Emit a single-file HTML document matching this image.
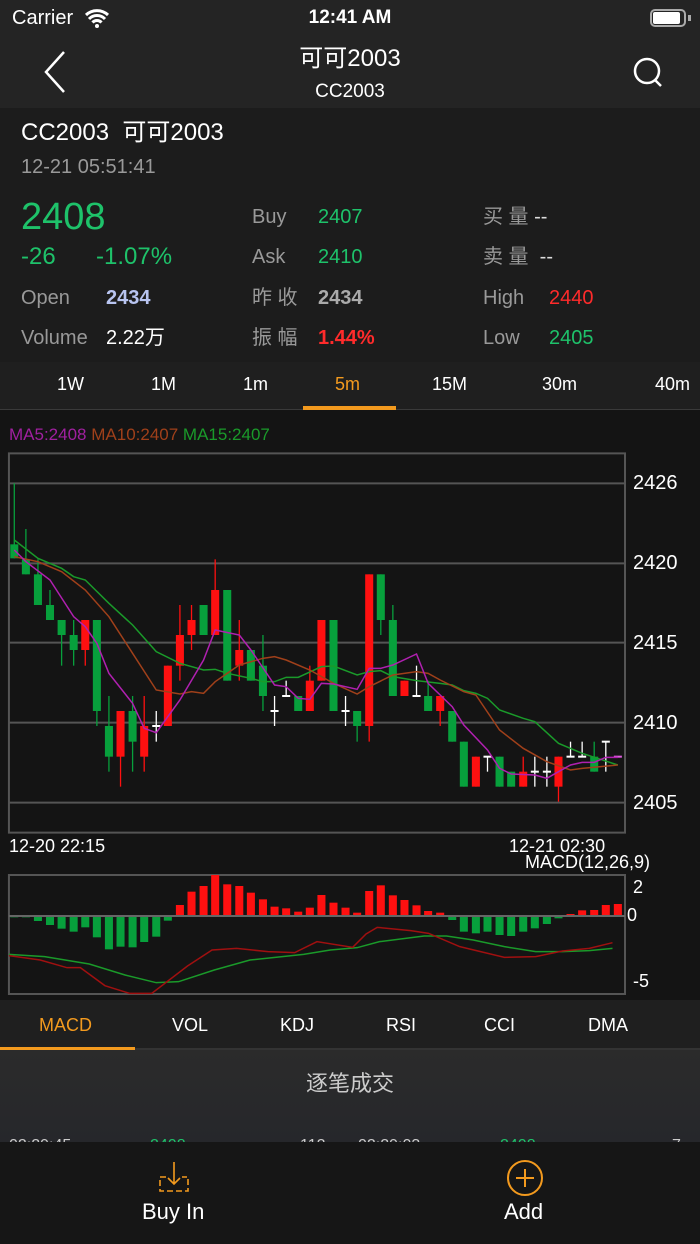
<!DOCTYPE html>
<html><head><meta charset="utf-8"><style>
*{margin:0;padding:0;box-sizing:border-box}
body{width:700px;height:1244px;overflow:hidden;background:#141414;font-family:"Liberation Sans","Noto Sans CJK SC",sans-serif;color:#fff;position:relative}
.a{position:absolute;white-space:nowrap;line-height:1}
.g{color:#1ec26a}.r{color:#ff2b2b}.gr{color:#999}
</style></head><body>
<div class="a" style="left:0;top:0;width:700px;height:108px;background:#242424"></div>
<div class="a" style="left:12px;top:8px;font-size:20px">Carrier</div>
<svg class="a" style="left:84px;top:8px" width="26" height="20" viewBox="0 0 26 20"><path d="M2 7a16 16 0 0 1 22 0M5 11a11 11 0 0 1 16 0M8.5 14.5a6 6 0 0 1 9 0" stroke="#fff" stroke-width="3" fill="none"/><circle cx="13" cy="18" r="2" fill="#fff"/></svg>
<div class="a" style="left:0;width:700px;text-align:center;top:8px;font-size:19px;font-weight:bold">12:41 AM</div>
<div class="a" style="left:650px;top:9px;width:36px;height:18px;border:2px solid #aaa;border-radius:5px"></div>
<div class="a" style="left:653px;top:12px;width:27px;height:12px;background:#fff;border-radius:2px"></div>
<div class="a" style="left:688px;top:15px;width:3px;height:6px;background:#aaa"></div>
<svg class="a" style="left:40px;top:50px" width="30" height="44"><path d="M24 2L6 22L24 42" stroke="#fff" stroke-width="2.5" fill="none"/></svg>
<div class="a" style="left:0;width:700px;text-align:center;top:47px;font-size:24px">可可2003</div>
<div class="a" style="left:0;width:700px;text-align:center;top:82px;font-size:19px">CC2003</div>
<svg class="a" style="left:630px;top:54px" width="36" height="36"><circle cx="17" cy="17" r="12" stroke="#fff" stroke-width="2.5" fill="none"/><path d="M25 26L31 32" stroke="#fff" stroke-width="2.5"/></svg>

<div class="a" style="left:0;top:108px;width:700px;height:254px;background:#1c1c1c"></div>
<div class="a" style="left:21px;top:121px;font-size:24px">CC2003&nbsp; 可可2003</div>
<div class="a gr" style="left:21px;top:157px;font-size:20px">12-21 05:51:41</div>
<div class="a g" style="left:21px;top:198px;font-size:38px">2408</div>
<div class="a g" style="left:21px;top:245px;font-size:24px">-26</div>
<div class="a g" style="left:96px;top:245px;font-size:24px">-1.07%</div>
<div class="a gr" style="left:21px;top:288px;font-size:20px">Open</div>
<div class="a" style="left:106px;top:288px;font-size:20px;font-weight:bold;color:#b8c4f0">2434</div>
<div class="a gr" style="left:21px;top:328px;font-size:20px">Volume</div>
<div class="a" style="left:106px;top:328px;font-size:20px">2.22万</div>
<div class="a gr" style="left:252px;top:207px;font-size:20px">Buy</div>
<div class="a g" style="left:318px;top:207px;font-size:20px">2407</div>
<div class="a gr" style="left:252px;top:247px;font-size:20px">Ask</div>
<div class="a g" style="left:318px;top:247px;font-size:20px">2410</div>
<div class="a gr" style="left:252px;top:288px;font-size:20px">昨 收</div>
<div class="a" style="left:318px;top:288px;font-size:20px;font-weight:bold;color:#aaa">2434</div>
<div class="a gr" style="left:252px;top:328px;font-size:20px">振 幅</div>
<div class="a r" style="left:318px;top:328px;font-size:20px;font-weight:bold">1.44%</div>
<div class="a gr" style="left:483px;top:207px;font-size:20px">买 量 <span style="color:#ddd">--</span></div>
<div class="a gr" style="left:483px;top:247px;font-size:20px">卖 量 &nbsp;<span style="color:#ddd">--</span></div>
<div class="a gr" style="left:483px;top:288px;font-size:20px">High</div>
<div class="a r" style="left:549px;top:288px;font-size:20px">2440</div>
<div class="a gr" style="left:483px;top:328px;font-size:20px">Low</div>
<div class="a g" style="left:549px;top:328px;font-size:20px">2405</div>

<div class="a" style="left:0;top:362px;width:700px;height:48px;background:#1f1f1f;border-bottom:1px solid #3a3a3a"></div>
<div class="a" style="left:57px;top:375px;font-size:18px">1W</div>
<div class="a" style="left:151px;top:375px;font-size:18px">1M</div>
<div class="a" style="left:243px;top:375px;font-size:18px">1m</div>
<div class="a" style="left:335px;top:375px;font-size:18px;color:#f39a1e">5m</div>
<div class="a" style="left:432px;top:375px;font-size:18px">15M</div>
<div class="a" style="left:542px;top:375px;font-size:18px">30m</div>
<div class="a" style="left:655px;top:375px;font-size:18px">40m</div>
<div class="a" style="left:303px;top:406px;width:93px;height:4px;background:#f39a1e"></div>

<div class="a" style="left:9px;top:426px;font-size:17px"><span style="color:#a020a0">MA5:2408</span> <span style="color:#a0401a">MA10:2407</span> <span style="color:#1a9a2a">MA15:2407</span></div>

<svg class="a" style="left:0;top:420px" width="700" height="420" viewBox="0 0 1568 1260" preserveAspectRatio="none">
<g stroke="#555" stroke-width="2" vector-effect="non-scaling-stroke" fill="none">
<rect x="20" y="100" width="1380" height="1138" vector-effect="non-scaling-stroke"/>
<path d="M20 190H1400M20 430H1400M20 668H1400M20 908H1400M20 1148H1400" vector-effect="non-scaling-stroke"/>
</g>
<g id="c"></g>
<g fill="none" stroke-width="1.5">
<polyline vector-effect="non-scaling-stroke" stroke="#1a9a2a" points="32,360 85,415 138,445 165,470 191,480 244,550 297,615 350,695 403,730 456,750 482,748 509,760 562,775 589,785 615,785 641,772 668,772 720,740 747,738 800,765 827,755 853,752 880,770 933,782 986,790 1013,795 1039,812 1066,820 1092,835 1119,870 1172,895 1198,905 1251,970 1304,1000 1384,1035"/>
<polyline vector-effect="non-scaling-stroke" stroke="#a0401a" points="32,410 85,425 138,455 191,510 244,590 297,700 350,810 403,822 429,815 456,820 482,785 536,735 589,715 615,710 641,720 694,750 747,790 800,822 827,800 880,765 933,755 959,760 986,780 1039,815 1066,825 1119,930 1172,985 1225,1025 1278,1050 1304,1045 1384,1035"/>
<polyline vector-effect="non-scaling-stroke" stroke="#b020b0" points="32,390 58,425 112,480 165,590 191,620 217,670 244,760 297,850 323,925 350,938 403,840 456,720 482,630 536,645 562,690 615,795 641,800 668,835 694,838 720,790 747,792 800,808 827,745 853,745 880,735 933,702 959,790 986,825 1013,860 1039,915 1092,990 1119,1045 1145,1062 1198,1065 1225,1075 1251,1055 1278,1035 1304,1027 1331,1027 1357,1012 1384,1012"/>
</g>
</svg>
<div class="a" style="left:633px;top:473px;font-size:20px">2426</div>
<div class="a" style="left:633px;top:553px;font-size:20px">2420</div>
<div class="a" style="left:633px;top:633px;font-size:20px">2415</div>
<div class="a" style="left:633px;top:713px;font-size:20px">2410</div>
<div class="a" style="left:633px;top:793px;font-size:20px">2405</div>
<div class="a" style="left:9px;top:837px;font-size:18px">12-20 22:15</div>
<div class="a" style="left:509px;top:837px;font-size:18px">12-21 02:30</div>
<div class="a" style="left:525px;top:853px;font-size:18px">MACD(12,26,9)</div>

<svg class="a" style="left:0;top:840px" width="700" height="160" viewBox="0 0 1568 480" preserveAspectRatio="none">
<rect x="20" y="105" width="1380" height="357" fill="none" stroke="#555" stroke-width="2" vector-effect="non-scaling-stroke"/>
<g id="m"></g>
<path d="M20 228H1400" stroke="#666" stroke-width="2" vector-effect="non-scaling-stroke"/>
<g fill="none" stroke-width="1.5">
<polyline vector-effect="non-scaling-stroke" stroke="#1a9a2a" points="20,343 100,350 200,372 280,405 350,428 400,425 480,390 560,360 680,343 740,330 800,323 850,305 950,288 1000,288 1060,300 1130,320 1200,335 1260,335 1320,332 1372,325"/>
<polyline vector-effect="non-scaling-stroke" stroke="#a01010" points="20,347 90,360 150,383 180,383 235,437 290,460 340,460 420,378 475,330 530,325 600,335 660,338 710,305 790,322 820,282 845,262 920,272 960,280 1030,320 1130,352 1200,350 1260,333 1320,325 1372,308"/>
</g>
</svg>
<div class="a" style="left:633px;top:878px;font-size:18px">2</div>
<div class="a" style="left:627px;top:906px;font-size:18px">0</div>
<div class="a" style="left:633px;top:972px;font-size:18px">-5</div>

<div class="a" style="left:0;top:1000px;width:700px;height:50px;background:#1f1f1f;border-bottom:2px solid #333"></div>
<div class="a" style="left:39px;top:1016px;font-size:18px;color:#f39a1e">MACD</div>
<div class="a" style="left:172px;top:1016px;font-size:18px">VOL</div>
<div class="a" style="left:280px;top:1016px;font-size:18px">KDJ</div>
<div class="a" style="left:386px;top:1016px;font-size:18px">RSI</div>
<div class="a" style="left:484px;top:1016px;font-size:18px">CCI</div>
<div class="a" style="left:588px;top:1016px;font-size:18px">DMA</div>
<div class="a" style="left:0;top:1047px;width:135px;height:3px;background:#f39a1e"></div>
<div class="a" style="left:0;top:1050px;width:700px;height:92px;background:linear-gradient(#2b2b2b,#26272b)"></div>
<div class="a" style="left:0;width:700px;text-align:center;top:1073px;font-size:22px;color:#ccc">逐笔成交</div>
<div class="a" style="left:0;top:1130px;width:700px;height:12px;overflow:hidden;font-size:16px;color:#ccc">
<span class="a" style="left:9px;top:8px">02:29:45</span><span class="a g" style="left:150px;top:8px">2408</span><span class="a" style="left:300px;top:8px">112</span><span class="a" style="left:358px;top:8px">02:29:03</span><span class="a g" style="left:500px;top:8px">2408</span><span class="a" style="left:672px;top:8px">7</span></div>
<div class="a" style="left:0;top:1142px;width:700px;height:102px;background:#161616"></div>
<svg class="a" style="left:157px;top:1160px" width="36" height="36"><path d="M17 2V24M11 18L17 24L23 18" stroke="#f39a1e" stroke-width="1.6" fill="none"/><path d="M9 17H3V31H31V17H25" stroke="#f39a1e" stroke-width="1.6" fill="none" stroke-dasharray="6 3"/></svg>
<div class="a" style="left:142px;top:1201px;font-size:22px">Buy In</div>
<svg class="a" style="left:505px;top:1158px" width="40" height="40"><circle cx="20" cy="20" r="17" stroke="#f39a1e" stroke-width="2" fill="none"/><path d="M20 11V29M11 20H29" stroke="#f39a1e" stroke-width="2"/></svg>
<div class="a" style="left:504px;top:1201px;font-size:22px">Add</div>

<script>
var C=[[32,373,415,190,415,'g'],[58,418,463,327,463,'g'],[85,463,555,418,555,'g'],[112,555,600,510,600,'g'],[138,600,645,600,737,'g'],[165,645,690,600,737,'g'],[191,600,690,600,737,'r'],[217,600,873,600,918,'g'],[244,918,1010,828,1055,'g'],[270,873,1010,873,1100,'r'],[297,873,965,828,1055,'g'],[323,918,1010,828,1055,'r'],[350,918,918,873,965,'w'],[376,737,918,737,918,'r'],[403,645,737,555,782,'r'],[429,600,645,555,690,'r'],[456,555,645,555,645,'g'],[482,510,645,418,645,'r'],[509,510,782,510,782,'g'],[536,690,737,600,782,'r'],[562,690,782,690,782,'g'],[589,737,828,645,873,'g'],[615,873,873,828,918,'w'],[641,828,828,782,828,'w'],[668,828,873,828,873,'g'],[694,782,873,737,873,'r'],[720,600,782,600,782,'r'],[747,600,873,600,873,'g'],[774,873,873,828,918,'w'],[800,873,918,873,965,'g'],[827,463,918,463,965,'r'],[853,463,600,463,645,'g'],[880,600,828,555,828,'g'],[906,782,828,782,828,'r'],[933,828,828,737,828,'w'],[959,828,873,782,873,'g'],[986,828,873,828,918,'r'],[1013,873,965,873,965,'g'],[1039,965,1100,965,1100,'g'],[1066,1010,1100,1010,1100,'r'],[1092,1010,1010,1010,1055,'w'],[1119,1010,1100,1010,1100,'g'],[1145,1055,1100,1055,1100,'g'],[1172,1055,1100,1010,1100,'r'],[1198,1055,1055,1010,1100,'w'],[1225,1055,1055,1010,1100,'w'],[1251,1010,1100,1010,1145,'r'],[1278,1010,1010,965,1010,'w'],[1304,1010,1010,965,1010,'w'],[1331,1010,1055,965,1055,'g'],[1357,965,965,965,1055,'w'],[1384,1010,1010,1010,1010,'p']];
var col={g:'#07a03c',r:'#ff1010',w:'#fff',p:'#e060e0'},s='';
C.forEach(function(c){var k=col[c[5]];
s+='<line x1="'+c[0]+'" x2="'+c[0]+'" y1="'+c[3]+'" y2="'+c[4]+'" stroke="'+k+'" stroke-width="1.3" vector-effect="non-scaling-stroke"/>';
if(c[2]-c[1]<3)s+='<rect x="'+(c[0]-9)+'" y="'+(c[1]-3)+'" width="18" height="6" fill="'+k+'"/>';
else s+='<rect x="'+(c[0]-9)+'" y="'+c[1]+'" width="18" height="'+(c[2]-c[1])+'" fill="'+k+'"/>';});
document.getElementById('c').innerHTML=s;
var M=[232,232,243,255,266,275,262,292,328,320,322,306,290,242,195,155,138,105,133,138,158,178,200,205,215,203,165,188,203,218,153,136,166,180,196,213,218,240,275,280,275,285,288,275,265,252,235,222,211,210,195,192],m='';
M.forEach(function(v,i){var x=C[i][0]-9,t=Math.min(v,228),h=Math.abs(v-228);m+='<rect x="'+x+'" y="'+t+'" width="18" height="'+Math.max(h,3)+'" fill="'+(v<228?'#ff1010':'#07a03c')+'"/>';});
document.getElementById('m').innerHTML=m;
</script>
</body></html>
